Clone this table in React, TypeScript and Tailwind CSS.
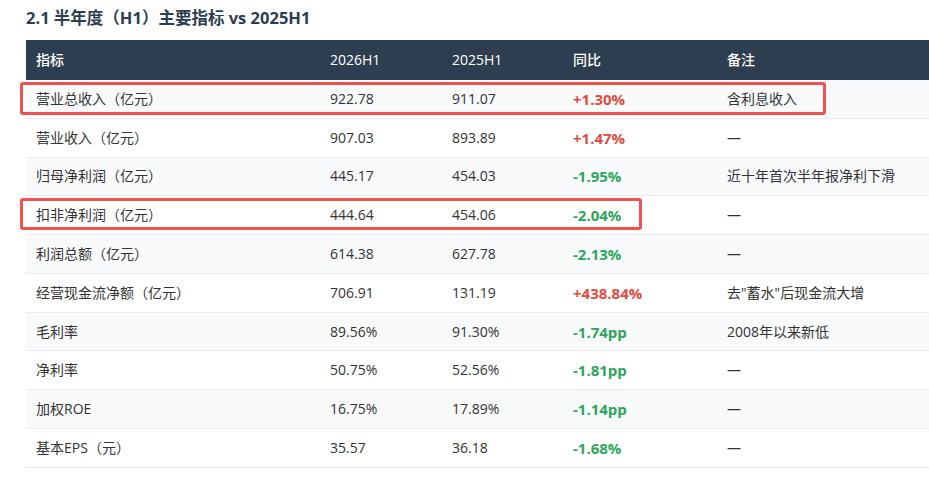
type Row = {
  name: string;
  cur: string;
  prev: string;
  yoy: string;
  note: string;
};

const rows: Row[] = [
  { name: "营业总收入（亿元）", cur: "922.78", prev: "911.07", yoy: "+1.30%", note: "含利息收入" },
  { name: "营业收入（亿元）", cur: "907.03", prev: "893.89", yoy: "+1.47%", note: "—" },
  { name: "归母净利润（亿元）", cur: "445.17", prev: "454.03", yoy: "-1.95%", note: "近十年首次半年报净利下滑" },
  { name: "扣非净利润（亿元）", cur: "444.64", prev: "454.06", yoy: "-2.04%", note: "—" },
  { name: "利润总额（亿元）", cur: "614.38", prev: "627.78", yoy: "-2.13%", note: "—" },
  { name: "经营现金流净额（亿元）", cur: "706.91", prev: "131.19", yoy: "+438.84%", note: "去\"蓄水\"后现金流大增" },
  { name: "毛利率", cur: "89.56%", prev: "91.30%", yoy: "-1.74pp", note: "2008年以来新低" },
  { name: "净利率", cur: "50.75%", prev: "52.56%", yoy: "-1.81pp", note: "—" },
  { name: "加权ROE", cur: "16.75%", prev: "17.89%", yoy: "-1.14pp", note: "—" },
  { name: "基本EPS（元）", cur: "35.57", prev: "36.18", yoy: "-1.68%", note: "—" },
];

export default function App() {
  return (
    <div
      className="w-[929px] h-[478px] overflow-hidden bg-white pl-[26px] pt-[6px] text-[#333]"
      style={{ fontFamily: '"Open Sans", "Noto Sans CJK SC", sans-serif' }}
    >
      <h3 className="h-6 leading-6 text-[16.5px] font-bold text-[#2c3e50] mb-[10px]">
        2.1 半年度（H1）主要指标 vs 2025H1
      </h3>
      <div className="relative">
        <table className="w-[903px] table-fixed border-collapse text-[14px]">
          <colgroup>
            <col className="w-[294px]" />
            <col className="w-[122px]" />
            <col className="w-[121px]" />
            <col className="w-[154px]" />
            <col />
          </colgroup>
          <thead>
            <tr className="bg-[#2c3e50] text-white h-10">
              {["指标", "2026H1", "2025H1", "同比", "备注"].map((h) => (
                <th key={h} className="text-left font-medium px-[10px] leading-5">
                  {h}
                </th>
              ))}
            </tr>
          </thead>
          <tbody>
            {rows.map((r, i) => (
              <tr key={r.name} className={`border-b border-[#e8ecef] ${i % 2 === 0 ? "bg-[#f8fafc]" : "bg-white"}`}>
                <td className="px-[10px] py-[8.9px] leading-5">{r.name}</td>
                <td className="px-[10px] py-[8.9px] leading-5">{r.cur}</td>
                <td className="px-[10px] py-[8.9px] leading-5">{r.prev}</td>
                <td
                  className={`px-[10px] py-[8.9px] leading-5 font-bold text-[15px] ${
                    r.yoy.startsWith("+") ? "text-[#e04b3f]" : "text-[#2ea55c]"
                  }`}
                >
                  {r.yoy}
                </td>
                <td className="px-[10px] py-[8.9px] leading-5 whitespace-nowrap">{r.note}</td>
              </tr>
            ))}
          </tbody>
        </table>
        <div className="absolute left-[-6px] top-[42px] w-[806px] h-[33px] border-[3px] border-[#ef5350] rounded-[3px]" />
        <div className="absolute left-[-6px] top-[158px] w-[622px] h-[32px] border-[3px] border-[#ef5350] rounded-[3px]" />
      </div>
    </div>
  );
}
